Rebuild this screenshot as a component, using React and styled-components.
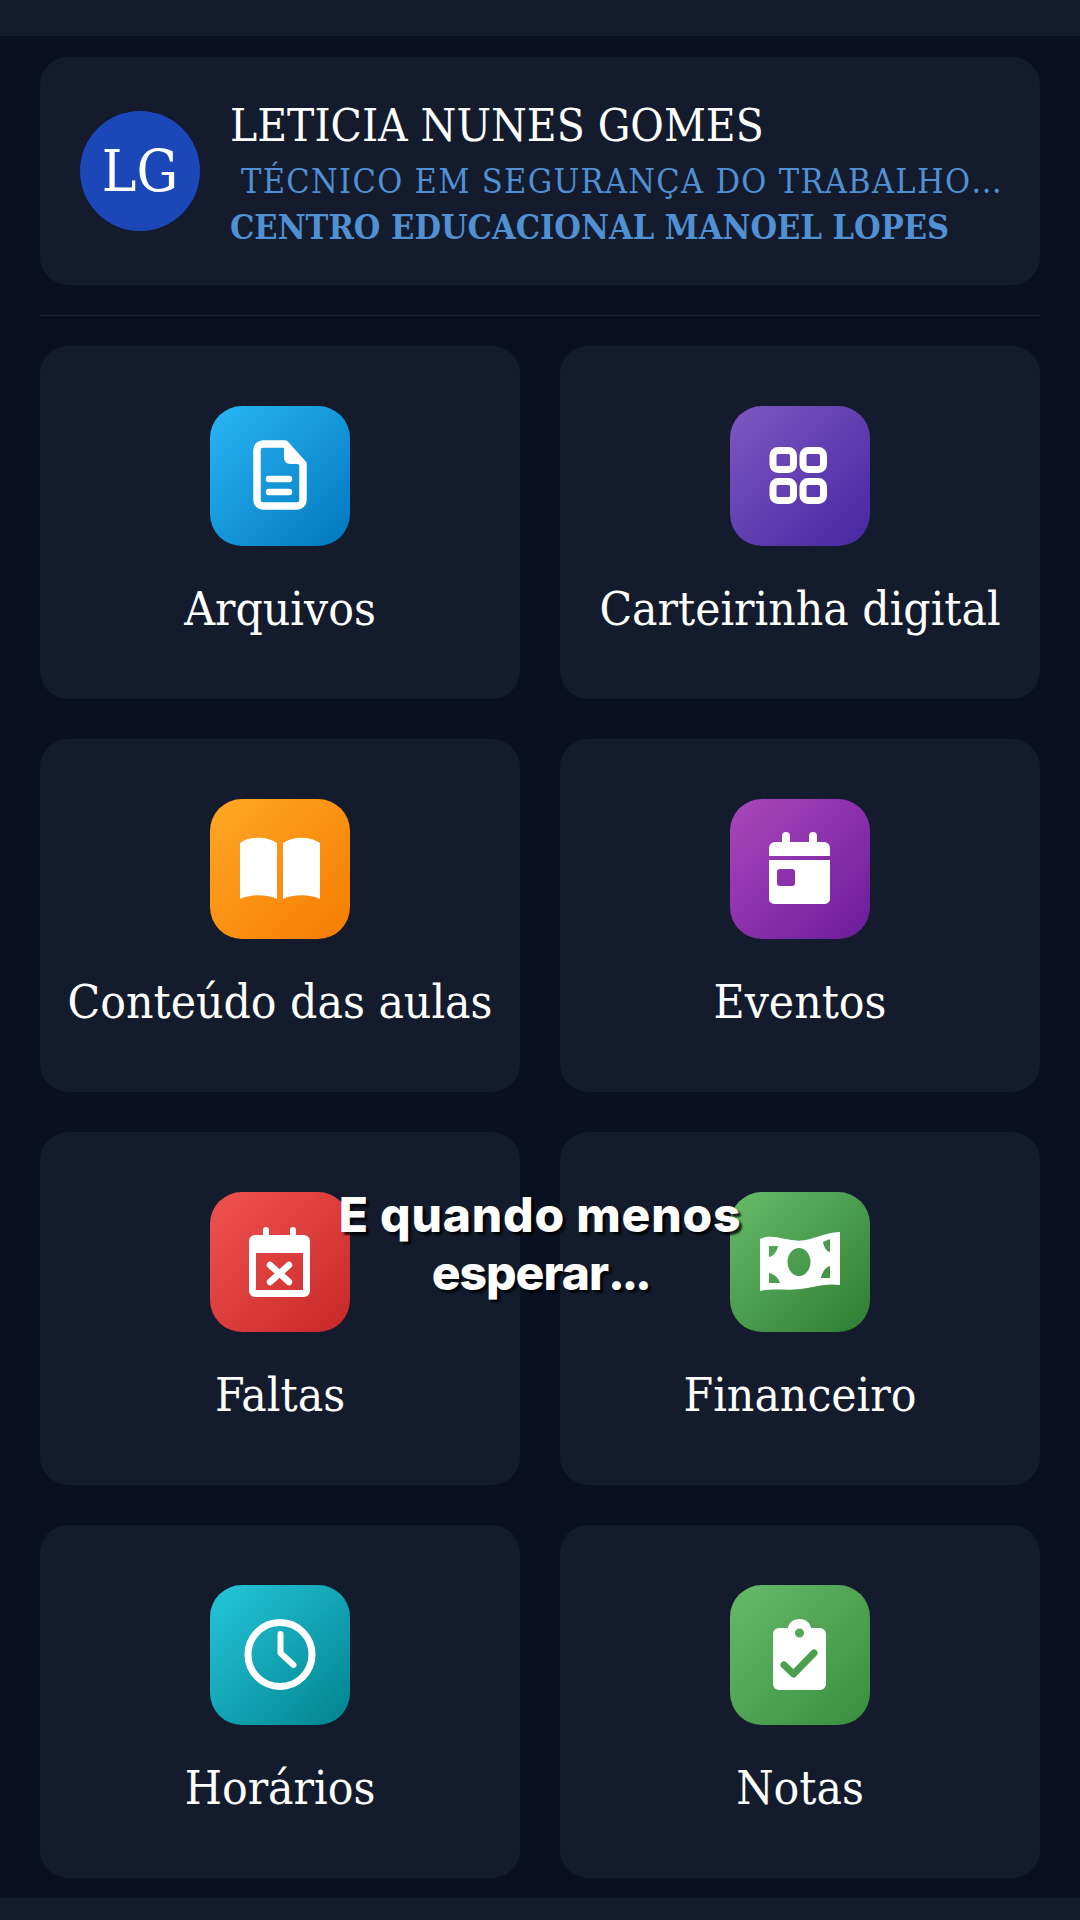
import React from "react";
import styled, { createGlobalStyle } from "styled-components";

const slab = `"DejaVu Serif Condensed", "DejaVu Serif", "Liberation Serif", serif`;
const panel = "#131b2d";

const GlobalStyle = createGlobalStyle`
  html, body {
    margin: 0;
    padding: 0;
    background: #0a1020;
  }
  * {
    box-sizing: border-box;
  }
`;

const Screen = styled.div`
  position: relative;
  width: 1080px;
  height: 1920px;
  overflow: hidden;
  display: flex;
  flex-direction: column;
  background: #0a1020;
  font-family: ${slab};
`;

const StatusBar = styled.div`
  height: 36px;
  flex: none;
  background: ${panel};
`;

const Content = styled.main`
  flex: 1;
  padding: 21px 40px 0;
  display: flex;
  flex-direction: column;
`;

const ProfileCard = styled.section`
  height: 228px;
  flex: none;
  padding: 0 30px 0 40px;
  border-radius: 28px;
  background: ${panel};
  display: flex;
  align-items: center;
  gap: 30px;
`;

const Avatar = styled.div`
  width: 120px;
  height: 120px;
  flex: none;
  border-radius: 50%;
  background: #1c47b8;
  color: #fff;
  font-size: 58px;
  display: flex;
  align-items: center;
  justify-content: center;
`;

const ProfileText = styled.div`
  min-width: 0;
  display: flex;
  flex-direction: column;
`;

const Name = styled.div`
  color: #fff;
  font-size: 45.5px;
  line-height: 66px;
  white-space: nowrap;
`;

const Course = styled.div`
  color: #5090d3;
  font-size: 34px;
  line-height: 45px;
  padding-left: 11px;
  letter-spacing: 1.3px;
  white-space: nowrap;
`;

const School = styled.div`
  color: #5090d3;
  font-size: 34px;
  font-weight: 700;
  line-height: 46px;
  white-space: nowrap;
`;

const Divider = styled.hr`
  width: 100%;
  height: 1px;
  flex: none;
  margin: 30px 0;
  border: 0;
  background: #1c2538;
`;

const Grid = styled.div`
  display: grid;
  grid-template-columns: 480px 480px;
  grid-auto-rows: 353px;
  gap: 40px;
`;

const Card = styled.article`
  padding-top: 60px;
  border-radius: 28px;
  background: ${panel};
  display: flex;
  flex-direction: column;
  align-items: center;
`;

const Tile = styled.div`
  width: 140px;
  height: 140px;
  flex: none;
  border-radius: 32px;
  background: linear-gradient(135deg, ${(props) => props.$from}, ${(props) => props.$to});

  svg {
    display: block;
  }
`;

const Label = styled.div`
  margin-top: 34px;
  color: #fff;
  font-size: 47.5px;
  line-height: 58px;
  white-space: nowrap;
`;

const BottomBar = styled.div`
  height: 22px;
  flex: none;
  background: ${panel};
`;

const Caption = styled.div`
  position: absolute;
  left: 0;
  right: 0;
  top: 1186px;
  color: #fff;
  font-family: Inter, "Noto Sans", sans-serif;
  font-size: 48px;
  font-weight: 800;
  line-height: 58px;
  letter-spacing: 0.8px;
  text-align: center;
  text-shadow: 3px 3px 2px rgba(0, 0, 0, 0.8);
`;

const TightLine = styled.span`
  letter-spacing: -1px;
`;

const Dots = styled.span`
  letter-spacing: -3.5px;
`;

const Glyph = ({ children }) => (
  <svg width="140" height="140" viewBox="0 0 140 140" fill="none">
    {children}
  </svg>
);

const FileIcon = () => (
  <Glyph>
    <path
      d="M53 38H75L93 58V94a6 6 0 0 1-6 6H53a6 6 0 0 1-6-6V44a6 6 0 0 1 6-6z"
      stroke="#fff"
      strokeWidth="7.5"
      strokeLinejoin="round"
    />
    <path d="M74 38L94 58H80a6 6 0 0 1-6-6z" fill="#fff" />
    <path d="M59 73H79M59 86H79" stroke="#fff" strokeWidth="6.5" strokeLinecap="round" />
  </Glyph>
);

const GridIcon = () => (
  <Glyph>
    <g stroke="#fff" strokeWidth="7">
      <rect x="43" y="44.5" width="20.5" height="19" rx="5" />
      <rect x="73" y="44.5" width="20.5" height="19" rx="5" />
      <rect x="43" y="75.5" width="20.5" height="19" rx="5" />
      <rect x="73" y="75.5" width="20.5" height="19" rx="5" />
    </g>
  </Glyph>
);

const BookIcon = () => (
  <Glyph>
    <path d="M30 44C40 37 57 37 67 44V100C57 95 40 95 30 100Z" fill="#fff" />
    <path d="M73 44C83 37 100 37 110 44V100C100 95 83 95 73 100Z" fill="#fff" />
  </Glyph>
);

const EventIcon = () => (
  <Glyph>
    <path d="M39 57V49a6 6 0 0 1 6-6H94a6 6 0 0 1 6 6V57Z" fill="#fff" />
    <path d="M56 37V46M83 37V46" stroke="#fff" strokeWidth="8" strokeLinecap="round" />
    <path
      fillRule="evenodd"
      d="M39 61H100V100a5 5 0 0 1-5 5H44a5 5 0 0 1-5-5ZM50 70a3 3 0 0 0-3 3V84a3 3 0 0 0 3 3H62a3 3 0 0 0 3-3V73a3 3 0 0 0-3-3Z"
      fill="#fff"
    />
  </Glyph>
);

const AbsenceIcon = () => (
  <Glyph>
    <path d="M56 38V48M83 38V48" stroke="#fff" strokeWidth="6" strokeLinecap="round" />
    <path
      fillRule="evenodd"
      d="M45 43H94a6 6 0 0 1 6 6V99a6 6 0 0 1-6 6H45a6 6 0 0 1-6-6V49a6 6 0 0 1 6-6ZM46 61V98H93V61Z"
      fill="#fff"
    />
    <path d="M60 73L79 90M79 73L60 90" stroke="#fff" strokeWidth="6.5" strokeLinecap="round" />
  </Glyph>
);

const MoneyIcon = () => (
  <Glyph>
    <path
      fillRule="evenodd"
      d="M30 47C46 40 60 53 80 47C90 44 100 40 110 40V93C95 91 85 95 70 97C55 99 44 96 30 99ZM69 56C63 56 57.500 62 57.500 70C57.500 78 63 84 69 84C75 84 80.500 78 80.500 70C80.500 62 75 56 69 56ZM39 54V65C44 64 47 59 48 54ZM93 50C94 55 96 59 100 60V47ZM39 81V91H50C49 86 44 82 39 81ZM100 74C96 75 92 80 91 86H100Z"
      fill="#fff"
    />
  </Glyph>
);

const ClockIcon = () => (
  <Glyph>
    <circle cx="70" cy="69.500" r="32" stroke="#fff" strokeWidth="7" />
    <path
      d="M70.500 49V68L83.500 80"
      stroke="#fff"
      strokeWidth="6"
      strokeLinecap="round"
      strokeLinejoin="round"
    />
  </Glyph>
);

const ClipboardIcon = () => (
  <Glyph>
    <path
      fillRule="evenodd"
      d="M58 43C59 37 64 34 69.500 34C75 34 80 37 81 43H90a6 6 0 0 1 6 6V99a6 6 0 0 1-6 6H49a6 6 0 0 1-6-6V49a6 6 0 0 1 6-6ZM69.500 43.500a4.500 4.500 0 1 0 0 9a4.500 4.500 0 1 0 0-9Z"
      fill="#fff"
    />
    <path
      d="M54 80L63.500 89L84 68"
      stroke="#4a9f4f"
      strokeWidth="7"
      strokeLinecap="round"
      strokeLinejoin="round"
    />
  </Glyph>
);

const items = [
  { label: "Arquivos", from: "#29b6f6", to: "#0277bd", icon: <FileIcon /> },
  { label: "Carteirinha digital", from: "#7e57c2", to: "#4527a0", icon: <GridIcon /> },
  { label: "Conteúdo das aulas", from: "#ffa726", to: "#f57c00", icon: <BookIcon /> },
  { label: "Eventos", from: "#ab47bc", to: "#6a1b9a", icon: <EventIcon /> },
  { label: "Faltas", from: "#ef5350", to: "#c62828", icon: <AbsenceIcon /> },
  { label: "Financeiro", from: "#66bb6a", to: "#2e7d32", icon: <MoneyIcon /> },
  { label: "Horários", from: "#26c6da", to: "#00838f", icon: <ClockIcon /> },
  { label: "Notas", from: "#66bb6a", to: "#388e3c", icon: <ClipboardIcon /> },
];

export default function App() {
  return (
    <Screen>
      <GlobalStyle />
      <StatusBar />
      <Content>
        <ProfileCard>
          <Avatar>LG</Avatar>
          <ProfileText>
            <Name>LETICIA NUNES GOMES</Name>
            <Course>TÉCNICO EM SEGURANÇA DO TRABALHO…</Course>
            <School>CENTRO EDUCACIONAL MANOEL LOPES</School>
          </ProfileText>
        </ProfileCard>
        <Divider />
        <Grid>
          {items.map((item) => (
            <Card key={item.label}>
              <Tile $from={item.from} $to={item.to}>
                {item.icon}
              </Tile>
              <Label>{item.label}</Label>
            </Card>
          ))}
        </Grid>
      </Content>
      <BottomBar />
      <Caption>
        E quando menos
        <br />
        <TightLine>
          esperar<Dots>...</Dots>
        </TightLine>
      </Caption>
    </Screen>
  );
}
